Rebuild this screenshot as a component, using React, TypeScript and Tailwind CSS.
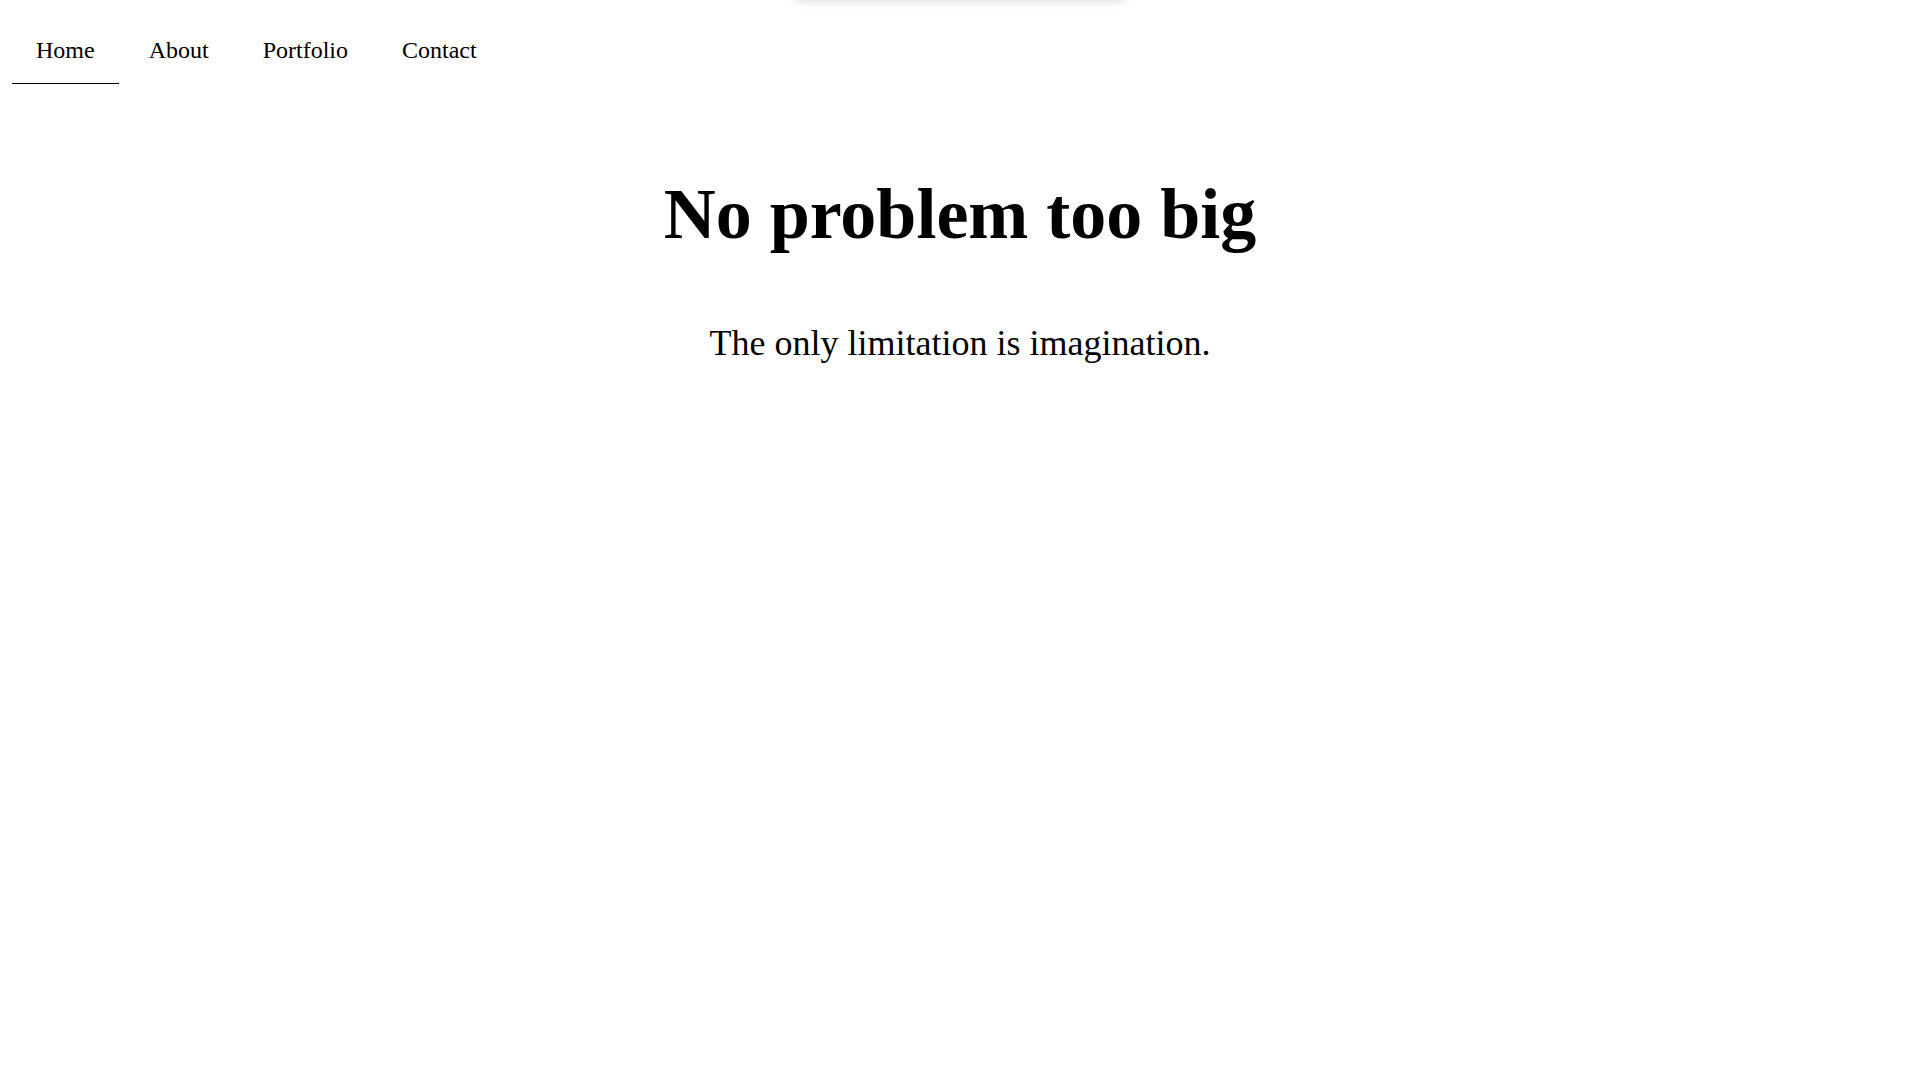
import React from "react";

const links = ["Home", "About", "Portfolio", "Contact"];

export default function App() {
  return (
    <div className="relative min-h-[1080px] overflow-hidden bg-white text-black font-['Liberation_Serif','Times_New_Roman',serif]">
      {/* toast tucked above the viewport, only its shadow shows */}
      <div className="absolute left-1/2 top-0 h-10 w-[330px] -translate-x-1/2 -translate-y-full rounded-md bg-white shadow-[0_2px_10px_rgba(0,0,0,0.12)]" />

      <nav className="pl-3 text-[24px] leading-[28px]">
        {links.map((label, i) => (
          <React.Fragment key={label}>
            <a
              href="#"
              className={
                "inline-block px-6 pt-9 pb-[19px] " +
                (i === 0 ? "border-b border-black" : "border-b border-transparent")
              }
            >
              {label}
            </a>{" "}
          </React.Fragment>
        ))}
      </nav>

      <main className="pt-[90px] text-center">
        <h1 className="text-[72px] font-bold leading-[80px]">No problem too big</h1>
        <p className="mt-[69px] text-[36px] leading-[40px]">The only limitation is imagination.</p>
      </main>
    </div>
  );
}
